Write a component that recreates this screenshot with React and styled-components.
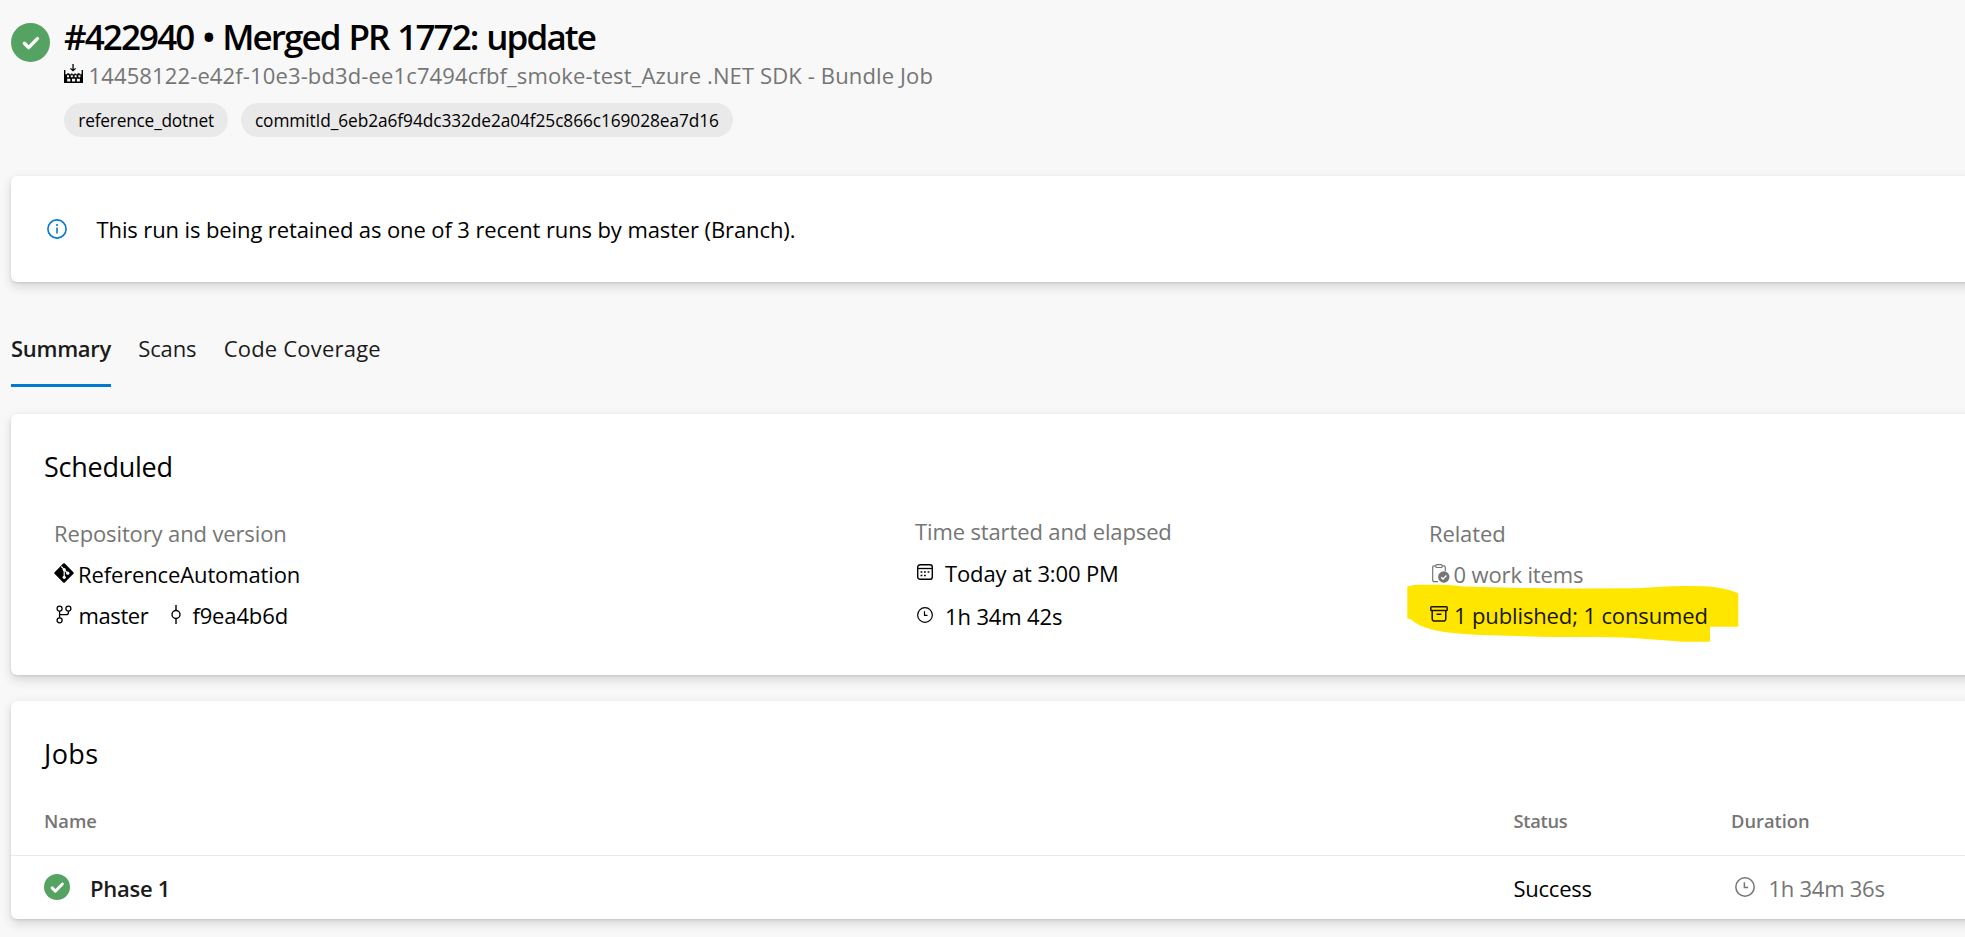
import React from "react";
import styled, { createGlobalStyle } from "styled-components";

const GlobalStyle = createGlobalStyle`
  *, *::before, *::after { box-sizing: border-box; }
  html, body { margin: 0; padding: 0; }
  body {
    background: #f8f8f8;
    color: #000;
    font-family: "Open Sans", "Noto Sans", sans-serif;
    font-size: 22px;
    overflow: hidden;
  }
  svg { display: block; flex: none; }
`;

const Page = styled.main`
  height: 937px;
  padding-left: 11px;
  overflow: hidden;
`;

const Header = styled.header`
  display: flex;
  align-items: flex-start;
  gap: 14px;
  padding-top: 16px;
`;

const StatusBadge = styled.div`
  margin-top: 7px;
`;

const Title = styled.h1`
  margin: 0;
  font-size: 35px;
  line-height: 42px;
  font-weight: 600;
  letter-spacing: -1.9px;
  word-spacing: 1.6px;
  white-space: nowrap;
`;

const Pipeline = styled.div`
  display: flex;
  align-items: center;
  gap: 5.5px;
  margin-top: 2px;
  line-height: 30px;
  color: #757575;
  letter-spacing: 0.13px;
  white-space: nowrap;

  svg { color: #000; margin-bottom: 4px; }
`;

const Pills = styled.div`
  display: flex;
  gap: 13px;
  margin-top: 13px;
`;

const Pill = styled.span`
  height: 34px;
  padding: 1px 13.7px 0 14.3px;
  border-radius: 17px;
  background: #e9e9e9;
  font-size: 17.3px;
  line-height: 34px;
  letter-spacing: ${(p) => p.$track}px;
  white-space: nowrap;
`;

const Card = styled.section`
  margin-right: -20px;
  background: #fff;
  border-radius: 6px;
  box-shadow: 0 4.8px 10.8px rgba(0, 0, 0, 0.132), 0 1px 2.7px rgba(0, 0, 0, 0.108);
`;

const Notice = styled(Card)`
  display: flex;
  align-items: center;
  gap: 29.5px;
  height: 106px;
  margin-top: 39px;
  padding-left: 36px;
  letter-spacing: -0.11px;
  white-space: nowrap;

  svg { color: #0078d4; }
`;

const Tabs = styled.nav`
  display: flex;
  gap: 27.2px;
  margin-top: 51px;
`;

const Tab = styled.span`
  padding-bottom: 21px;
  border-bottom: 3px solid ${(p) => (p.$active ? "#0078d4" : "transparent")};
  font-weight: ${(p) => (p.$active ? 600 : 400)};
  line-height: 30px;
  letter-spacing: ${(p) => p.$track}px;
  color: #1b1b1b;
  white-space: nowrap;
`;

const SummaryCard = styled(Card)`
  height: 261px;
  margin-top: 27px;
  padding-top: 35px;
`;

const CardTitle = styled.h2`
  margin: 0;
  padding-left: 33px;
  font-size: 27px;
  line-height: 36px;
  font-weight: 400;
  letter-spacing: ${(p) => p.$track}px;
`;

const SummaryGrid = styled.div`
  display: grid;
  grid-template-columns: 861px 514px auto;
  align-items: start;
  margin: 25px 0 0 43px;
`;

const Column = styled.div`
  padding-top: ${(p) => (p.$loose ? 0 : 3)}px;
  line-height: ${(p) => (p.$loose ? 42 : 41)}px;
  letter-spacing: -0.13px;
`;

const Label = styled.div`
  color: #757575;
`;

const Line = styled.div`
  position: relative;
  display: flex;
  align-items: center;
  margin-top: ${(p) => p.$gap || 0}px;
  color: ${(p) => (p.$muted ? "#757575" : "#000")};
  white-space: nowrap;
`;

const IconSlot = styled.span`
  display: flex;
  width: ${(p) => p.$width}px;
  margin-left: ${(p) => p.$before || 0}px;
  padding: 0 0 3px ${(p) => p.$inset || 0}px;
`;

const Name = styled.span`
  letter-spacing: ${(p) => p.$track}px;
`;

const MarkerStroke = styled.svg`
  position: absolute;
  left: -22px;
  top: -11px;
`;

const Marked = styled.span`
  position: relative;
  display: flex;
  align-items: center;
  color: #191600;
`;

const JobsCard = styled(Card)`
  height: 218px;
  margin-top: 26px;
  padding-top: 35px;
`;

const JobsRow = styled.div`
  display: grid;
  grid-template-columns: 1469.5px 217.5px auto;
  padding-left: 33px;
`;

const JobsHead = styled(JobsRow)`
  padding-top: 36px;
  padding-bottom: 21px;
  border-bottom: 1px solid #eaeaea;
  color: #757575;
  font-size: 18.3px;
  font-weight: 600;
  line-height: 26px;
`;

const HeadCell = styled.span`
  letter-spacing: ${(p) => p.$track || 0}px;
`;

const JobLine = styled(JobsRow)`
  height: 62px;
  align-items: center;
`;

const JobName = styled.div`
  display: flex;
  align-items: center;
  gap: 20px;
  color: #1b1b1b;
  font-weight: 600;
  letter-spacing: -0.3px;
`;

const Cell = styled.span`
  padding-top: 1px;
  letter-spacing: -0.25px;
`;

const JobDuration = styled.div`
  display: flex;
  align-items: center;
  gap: 13.5px;
  padding-left: 4px;
  color: #757575;
`;

const SuccessIcon = ({ size, small }) => (
  <svg width={size} height={size} viewBox="0 0 39 39" fill="none">
    <circle cx="19.5" cy="19.5" r="19.5" fill="#55a362" />
    <path
      d={small ? "M12.2 20.8 17 25.8 27.6 15" : "M13.4 20.3 17.6 24.6 26.4 15.6"}
      stroke="#fff"
      strokeWidth={small ? 4.4 : 3.5}
      strokeLinecap="round"
      strokeLinejoin="round"
    />
  </svg>
);

const BuildIcon = () => (
  <svg width="19" height="19" viewBox="0 0 19 19" fill="currentColor">
    <path d="M8.4 0h1.3v5.3l1.5-1.4.8.9L9 7.6 6 4.8l.8-.9 1.6 1.4z" />
    <path
      fillRule="evenodd"
      d="M0 6h1.4v4.3h1.9V9.2h2v1.1h2V9.2h1v1.1h2.3V9.2h1v1.1h2V9.2h2v1.1h2V6H19v13H0zM3 11.2v2.1h2v-2.1zM6.8 11.2v2.1h2v-2.1zM10.6 11.2v2.1h2v-2.1zM14.4 11.2v2.1h2v-2.1zM3.2 14.8v2.6h3.1v-2.6zM8 14.8v2.6h3.1v-2.6zM12.8 14.8v2.6h3.1v-2.6z"
    />
  </svg>
);

const InfoIcon = () => (
  <svg width="20" height="20" viewBox="0 0 20 20" fill="none" stroke="currentColor">
    <circle cx="10" cy="10" r="9.1" strokeWidth="1.6" />
    <path d="M10 8.6v6" strokeWidth="1.6" />
    <circle cx="10" cy="6" r="1.1" fill="currentColor" stroke="none" />
  </svg>
);

const GitIcon = () => (
  <svg width="20" height="20" viewBox="0 0 20 20" fill="none">
    <path d="M9.2.6a1.2 1.2 0 0 1 1.6 0l8.6 8.6a1.2 1.2 0 0 1 0 1.6l-8.6 8.6a1.2 1.2 0 0 1-1.6 0L.6 10.8a1.2 1.2 0 0 1 0-1.6z" fill="#000" />
    <path d="M7.3 3.5 10.2 6.4v8M10.4 6.8l3.2 3.2" stroke="#fff" strokeWidth="1.2" />
    <circle cx="10.2" cy="6.6" r="1.6" fill="#fff" />
    <circle cx="10.2" cy="14.3" r="1.6" fill="#fff" />
    <circle cx="13.8" cy="10.2" r="1.6" fill="#fff" />
  </svg>
);

const BranchIcon = () => (
  <svg width="16" height="19" viewBox="0 0 16 19" fill="none" stroke="currentColor" strokeWidth="1.3">
    <circle cx="3.6" cy="3.6" r="2.5" />
    <circle cx="12.4" cy="3.6" r="2.5" />
    <circle cx="3.6" cy="15.3" r="2.5" />
    <path d="M3.6 6.1v6.7M12.4 6.1v1.3a2.2 2.2 0 0 1-2.2 2.2H3.6" />
  </svg>
);

const CommitIcon = () => (
  <svg width="10" height="19" viewBox="0 0 10 19" fill="none" stroke="currentColor" strokeWidth="1.4">
    <circle cx="5" cy="9.5" r="4" />
    <path d="M5 0v5.5M5 13.5V19" />
  </svg>
);

const CalendarIcon = () => (
  <svg width="16" height="16" viewBox="0 0 16 16" fill="none" stroke="currentColor">
    <rect x=".7" y=".7" width="14.6" height="14.6" rx="2.4" strokeWidth="1.4" />
    <path d="M1 4.5h14" strokeWidth="1.3" />
    <path d="M7 8h1.8M10.6 8h1.8M3.6 8h1.8M3.6 11.5h1.8M7 11.5h1.8" strokeWidth="1.7" />
  </svg>
);

const ClockIcon = ({ size }) => (
  <svg width={size} height={size} viewBox="0 0 16 16" fill="none" stroke="currentColor">
    <circle cx="8" cy="8" r="7.35" strokeWidth="1.2" />
    <path d="M7.5 4.2v4.2h3" strokeWidth="1.2" />
  </svg>
);

const WorkItemIcon = () => (
  <svg width="18" height="19" viewBox="0 0 18 19" fill="none" stroke="currentColor">
    <path d="M6 17.6H2A1.3 1.3 0 0 1 .7 16.3V3.2A1.3 1.3 0 0 1 2 1.9h1.6M10.4 1.9H12a1.3 1.3 0 0 1 1.3 1.3v4" strokeWidth="1.2" />
    <rect x="3.8" y=".7" width="6.4" height="2.8" rx="1" strokeWidth="1.2" />
    <circle cx="11.8" cy="13" r="5.7" fill="currentColor" stroke="none" />
    <path d="m9.2 13.2 1.8 1.8 3.5-3.6" stroke="#fff" strokeWidth="1.4" />
  </svg>
);

const ArchiveIcon = () => (
  <svg width="18" height="16" viewBox="0 0 18 16" fill="none" stroke="currentColor" strokeWidth="1.5">
    <rect x=".8" y=".8" width="16.4" height="3.8" rx=".8" />
    <path d="M2.2 4.6v8.2a2.3 2.3 0 0 0 2.3 2.3h9a2.3 2.3 0 0 0 2.3-2.3V4.6M6.6 8.2h4.8" />
  </svg>
);

const Marker = () => (
  <MarkerStroke width="332" height="59" viewBox="0 0 332 59">
    <path
      fill="#ffe600"
      d="M.3 2.2 3.5 2Q5 .9 12 .8L33 .7Q43 .8 56 2.6L116 4 166 4.6 230 4.3Q255 2.5 276 2 300 1.9 310 3.4 324 5.6 331.3 9.4V42.7H303V57.7H276L243 55.3Q215 53 190 53H140L83 51.3Q60 50.6 46 49 28 47 17 43 8 39.5 3.5 35L.3 34.7Z"
    />
  </MarkerStroke>
);

export default function App() {
  return (
    <Page>
      <GlobalStyle />
      <Header>
        <StatusBadge>
          <SuccessIcon size={39} />
        </StatusBadge>
        <div>
          <Title>#422940 • Merged PR 1772: update</Title>
          <Pipeline>
            <BuildIcon />
            <span>14458122-e42f-10e3-bd3d-ee1c7494cfbf_smoke-test_Azure .NET SDK - Bundle Job</span>
          </Pipeline>
          <Pills>
            <Pill $track={-0.2}>reference_dotnet</Pill>
            <Pill $track={-0.08}>commitId_6eb2a6f94dc332de2a04f25c866c169028ea7d16</Pill>
          </Pills>
        </div>
      </Header>

      <Notice>
        <InfoIcon />
        <span>This run is being retained as one of 3 recent runs by master (Branch).</span>
      </Notice>

      <Tabs>
        <Tab $active $track={-0.3}>Summary</Tab>
        <Tab $track={-0.1}>Scans</Tab>
        <Tab $track={0.2}>Code Coverage</Tab>
      </Tabs>

      <SummaryCard>
        <CardTitle $track={-0.25}>Scheduled</CardTitle>
        <SummaryGrid>
          <Column>
            <Label>Repository and version</Label>
            <Line>
              <IconSlot $width={24}><GitIcon /></IconSlot>
              ReferenceAutomation
            </Line>
            <Line>
              <IconSlot $width={24.5} $inset={1.5}><BranchIcon /></IconSlot>
              <Name $track={-0.4}>master</Name>
              <IconSlot $width={21} $before={23}><CommitIcon /></IconSlot>
              f9ea4b6d
            </Line>
          </Column>
          <Column $loose>
            <Label>Time started and elapsed</Label>
            <Line>
              <IconSlot $width={30} $inset={2}><CalendarIcon /></IconSlot>
              Today at 3:00 PM
            </Line>
            <Line $gap={1}>
              <IconSlot $width={30} $inset={2}><ClockIcon size={16} /></IconSlot>
              1h 34m 42s
            </Line>
          </Column>
          <Column>
            <Label>Related</Label>
            <Line $muted>
              <IconSlot $width={24.5} $inset={3}><WorkItemIcon /></IconSlot>
              0 work items
            </Line>
            <Line>
              <Marker />
              <Marked>
                <IconSlot $width={25} $inset={1}><ArchiveIcon /></IconSlot>
                1 published; 1 consumed
              </Marked>
            </Line>
          </Column>
        </SummaryGrid>
      </SummaryCard>

      <JobsCard>
        <CardTitle $track={0.4}>Jobs</CardTitle>
        <JobsHead>
          <HeadCell>Name</HeadCell>
          <HeadCell $track={-0.3}>Status</HeadCell>
          <HeadCell>Duration</HeadCell>
        </JobsHead>
        <JobLine>
          <JobName>
            <SuccessIcon size={26} small />
            <Cell>Phase 1</Cell>
          </JobName>
          <Cell>Success</Cell>
          <JobDuration>
            <ClockIcon size={20} />
            <Cell>1h 34m 36s</Cell>
          </JobDuration>
        </JobLine>
      </JobsCard>
    </Page>
  );
}
